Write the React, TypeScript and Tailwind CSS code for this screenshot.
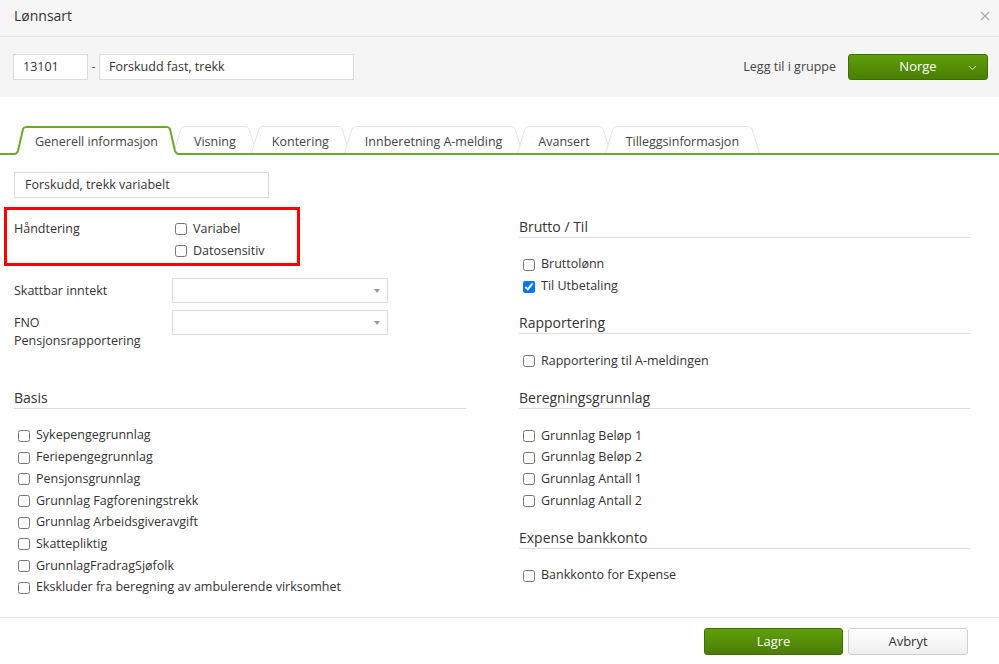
import React from "react";

const GREEN = "#6fa72b";

function Tab({ label, active }: { label: string; active?: boolean }) {
  if (active) {
    return (
      <div className="relative z-10 -mb-[2px] flex h-[29px]">
        <svg width="12" height="29" viewBox="0 0 12 29" className="block shrink-0">
          <path d="M0 29 L0 28 Q3 28 4 25 L9 3 Q10 1 12 1 L12 29 Z" fill="#fff" />
          <path d="M0 28 Q3 28 4 25 L9 3 Q10 1 12 1" fill="none" stroke={GREEN} strokeWidth="2" />
        </svg>
        <div className="flex items-center border-t-2 border-[#6fa72b] bg-white px-[9px] pt-[2px] text-[12.5px] text-[#444]">
          {label}
        </div>
        <svg width="12" height="29" viewBox="0 0 12 29" className="block shrink-0">
          <path d="M0 29 L0 1 Q2 1 3 3 L8 25 Q9 28 12 28 L12 29 Z" fill="#fff" />
          <path d="M0 1 Q2 1 3 3 L8 25 Q9 28 12 28" fill="none" stroke={GREEN} strokeWidth="2" />
        </svg>
      </div>
    );
  }
  return (
    <div className="relative -ml-[6px] flex h-[27px]">
      <svg width="12" height="27" viewBox="0 0 12 27" className="block shrink-0">
        <path d="M0 27 L8 3 Q9 0.5 12 0.5 L12 27 Z" fill="#fff" />
        <path d="M0.5 27 L8 3 Q9 0.5 12 0.5" fill="none" stroke="#e4e4e4" strokeWidth="1" />
      </svg>
      <div className="flex items-center border-t border-[#e4e4e4] bg-white px-[9px] pt-[4px] text-[12.5px] text-[#444]">
        {label}
      </div>
      <svg width="12" height="27" viewBox="0 0 12 27" className="block shrink-0">
        <path d="M0 27 L0 0.5 Q3 0.5 4 3 L11.5 27 Z" fill="#fff" />
        <path d="M0 0.5 Q3 0.5 4 3 L11.5 27" fill="none" stroke="#e4e4e4" strokeWidth="1" />
      </svg>
    </div>
  );
}

function Check({ label, checked }: { label: string; checked?: boolean }) {
  return (
    <label className="flex h-[21.7px] items-center gap-[6px] pl-[4px] text-[12.5px] text-[#333]">
      <input type="checkbox" defaultChecked={checked} className="m-0 h-[12px] w-[12px]" />
      <span>{label}</span>
    </label>
  );
}

function Section({ title, items, className }: { title: string; items: { l: string; c?: boolean }[]; className?: string }) {
  return (
    <div className={className}>
      <div className="border-b border-[#dedede] text-[14px] leading-[20px] text-[#333]">{title}</div>
      <div className="mt-[16px]">
        {items.map((it) => (
          <Check key={it.l} label={it.l} checked={it.c} />
        ))}
      </div>
    </div>
  );
}

function Select() {
  return (
    <div className="flex h-[25px] w-[216px] items-center justify-end border border-[#dcdcdc] bg-white pr-[7px]">
      <div className="h-0 w-0 border-l-[3.5px] border-r-[3.5px] border-t-[4px] border-l-transparent border-r-transparent border-t-[#999]" />
    </div>
  );
}

export default function App() {
  return (
    <div
      className="flex h-[664px] w-[999px] flex-col overflow-hidden bg-white text-[#333]"
      style={{ fontFamily: "'Open Sans', 'Noto Sans', sans-serif" }}
    >
      {/* Title bar */}
      <div className="flex h-[37px] items-center justify-between border-b border-[#e4e4e4] bg-[#f6f6f6] pb-[5px] pl-[14px] pr-[9px]">
        <div className="text-[14px] text-[#333]">Lønnsart</div>
        <svg width="10" height="10" viewBox="0 0 10 10">
          <path d="M1 1 L9 9 M9 1 L1 9" stroke="#aaa" strokeWidth="1.1" />
        </svg>
      </div>

      {/* Number / name row */}
      <div className="flex h-[60px] items-center justify-between bg-[#f5f5f5] pl-[13px] pr-[11px]">
        <div className="flex items-center">
          <div className="flex h-[26px] w-[75px] items-center border border-[#dcdcdc] bg-white pl-[9px] text-[12.5px]">13101</div>
          <div className="w-[11px] text-center text-[12.5px] text-[#555]">-</div>
          <div className="flex h-[26px] w-[255px] items-center border border-[#dcdcdc] bg-white pl-[9px] text-[12.5px]">
            Forskudd fast, trekk
          </div>
        </div>
        <div className="flex items-center gap-[12px]">
          <span className="text-[12.5px] text-[#444]">Legg til i gruppe</span>
          <div className="relative flex h-[26px] w-[140px] items-center justify-center rounded-[3px] border border-[#3f6d05] bg-gradient-to-b from-[#5f9f0b] to-[#4a7e05] text-[13px] text-white">
            Norge
            <svg width="9" height="6" viewBox="0 0 9 6" className="absolute right-[10px] top-[10px]">
              <path d="M1 1 L4.5 4.5 L8 1" fill="none" stroke="#cfe3b5" strokeWidth="1" />
            </svg>
          </div>
        </div>
      </div>

      {/* Tabs */}
      <div className="mt-[29px] flex items-end border-b-2 border-[#6fa72b] pl-[14px]">
        <Tab label="Generell informasjon" active />
        <Tab label="Visning" />
        <Tab label="Kontering" />
        <Tab label="Innberetning A-melding" />
        <Tab label="Avansert" />
        <Tab label="Tilleggsinformasjon" />
      </div>

      {/* Body */}
      <div className="grid flex-1 grid-cols-[452px_451px] gap-x-[53px] pl-[14px] pt-[17px]">
        <div className="flex flex-col">
          <div className="flex h-[26px] w-[255px] items-center border border-[#dcdcdc] bg-white pl-[10px] text-[12.5px]">
            Forskudd, trekk variabelt
          </div>

          <div className="mt-[9px] -ml-[10px] h-[59px] w-[296px] border-[3px] border-[#ff0000] pl-[7px] pt-[8px]">
            <div className="flex">
              <div className="w-[158px] text-[12.5px] leading-[22px]">Håndtering</div>
              <div className="flex flex-col">
                <label className="flex h-[22px] items-center gap-[6px] pl-[3px] text-[12.5px]">
                  <input type="checkbox" className="m-0 h-[12px] w-[12px]" />
                  <span>Variabel</span>
                </label>
                <label className="flex h-[22px] items-center gap-[6px] pl-[3px] text-[12.5px]">
                  <input type="checkbox" className="m-0 h-[12px] w-[12px]" />
                  <span>Datosensitiv</span>
                </label>
              </div>
            </div>
          </div>

          <div className="mt-[12px] flex items-center">
            <div className="w-[158px] pt-[1px] text-[12.5px]">Skattbar inntekt</div>
            <Select />
          </div>
          <div className="mt-[7px] flex items-start">
            <div className="w-[158px] pt-[4px] text-[12.5px] leading-[18px]">
              FNO
              <br />
              Pensjonsrapportering
            </div>
            <Select />
          </div>

          <Section
            className="mt-[38px]"
            title="Basis"
            items={[
              { l: "Sykepengegrunnlag" },
              { l: "Feriepengegrunnlag" },
              { l: "Pensjonsgrunnlag" },
              { l: "Grunnlag Fagforeningstrekk" },
              { l: "Grunnlag Arbeidsgiveravgift" },
              { l: "Skattepliktig" },
              { l: "GrunnlagFradragSjøfolk" },
              { l: "Ekskluder fra beregning av ambulerende virksomhet" },
            ]}
          />
        </div>

        <div className="flex flex-col pt-[45px]">
          <Section title="Brutto / Til" items={[{ l: "Bruttolønn" }, { l: "Til Utbetaling", c: true }]} />
          <Section className="mt-[16px]" title="Rapportering" items={[{ l: "Rapportering til A-meldingen" }]} />
          <Section
            className="mt-[16px]"
            title="Beregningsgrunnlag"
            items={[
              { l: "Grunnlag Beløp 1" },
              { l: "Grunnlag Beløp 2" },
              { l: "Grunnlag Antall 1" },
              { l: "Grunnlag Antall 2" },
            ]}
          />
          <Section className="mt-[16px]" title="Expense bankkonto" items={[{ l: "Bankkonto for Expense" }]} />
        </div>
      </div>

      {/* Footer */}
      <div className="flex h-[47px] items-start justify-end gap-[5px] border-t border-[#ebebeb] pr-[31px] pt-[10px]">
        <div className="flex h-[27px] w-[139px] items-center justify-center rounded-[3px] border border-[#3f6d05] bg-gradient-to-b from-[#5f9f0b] to-[#4a7e05] text-[13px] text-white">
          Lagre
        </div>
        <div className="flex h-[27px] w-[120px] items-center justify-center rounded-[3px] border border-[#cfcfcf] bg-gradient-to-b from-white to-[#efefef] text-[13px] text-[#333]">
          Avbryt
        </div>
      </div>
    </div>
  );
}
